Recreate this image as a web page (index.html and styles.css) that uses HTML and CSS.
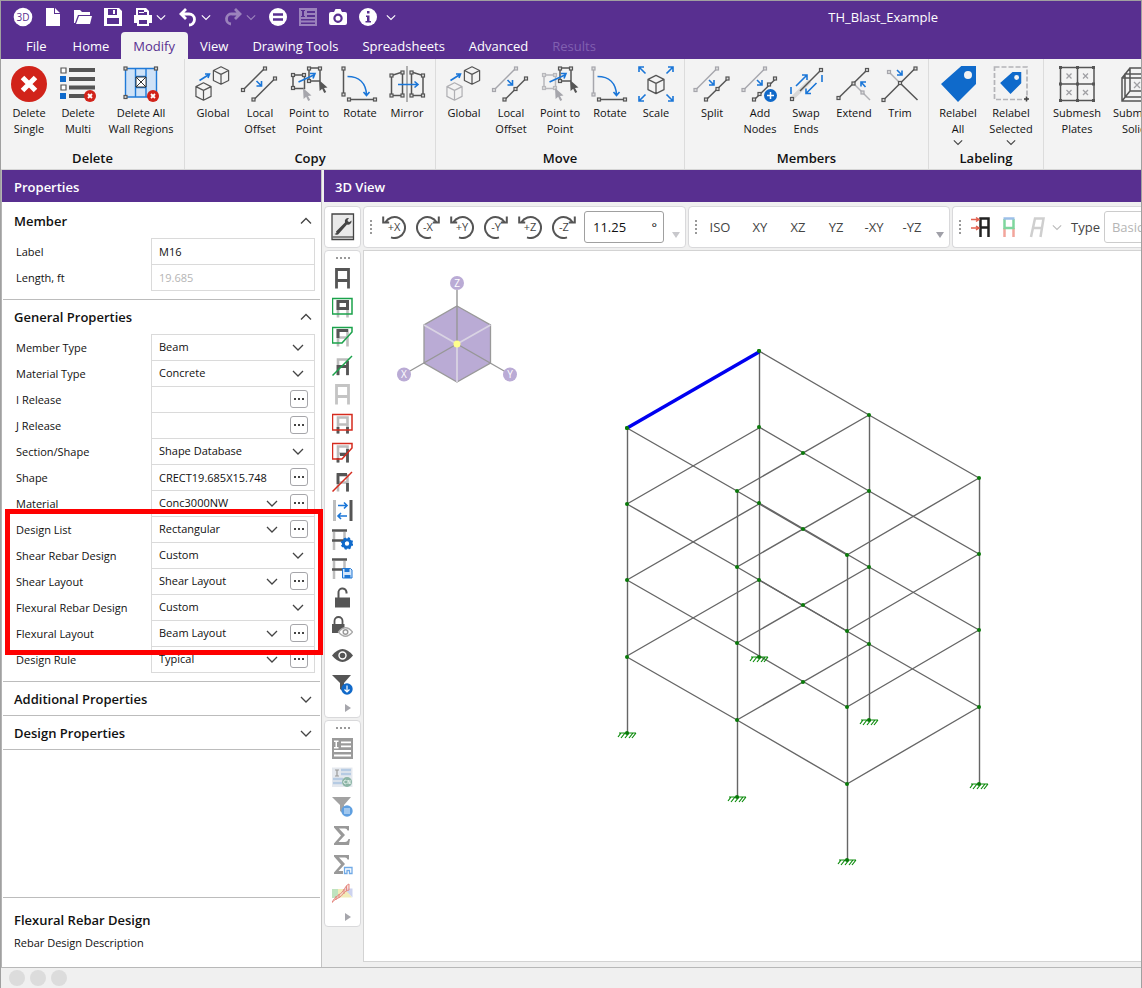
FILE: index.html
```html
<!DOCTYPE html>
<html lang="en">
<head>
<meta charset="utf-8">
<title>TH_Blast_Example</title>
<link rel="stylesheet" href="styles.css">
</head>
<body>
<svg class="sprite" aria-hidden="true">
  <symbol id="chev" viewBox="0 0 12 12"><path d="M1 4l5 5 5-5" fill="none" stroke="currentColor" stroke-width="1.3"/></symbol>
  <symbol id="chev-up" viewBox="0 0 12 12"><path d="M1 8.500l5-5 5 5" fill="none" stroke="currentColor" stroke-width="1.300"/></symbol>
  <symbol id="dots" viewBox="0 0 12 4"><path d="M1 1h2v2h-2zM5 1h2v2h-2zM9 1h2v2h-2z" fill="#444"/></symbol>
  <symbol id="cube" viewBox="0 0 18 20" overflow="visible"><path d="M9 .8l8 4v10.400l-8 4-8-4V4.800zM1 4.800l8 4 8-4M9 8.800v10.400" fill="none" stroke="currentColor" stroke-width="1.300" stroke-linejoin="round"/></symbol>
  <symbol id="nd" viewBox="0 0 4 4" overflow="visible"><rect x=".5" y=".5" width="3" height="3" fill="#ddd" stroke="currentColor" stroke-width="1.200"/></symbol>
  <symbol id="cursor" viewBox="0 0 9 13"><path d="M0 0l8.500 7.500-3.500.4 2.200 4-2 1-2-4.200L.6 11z" fill="currentColor"/></symbol>
  <symbol id="badx" viewBox="0 0 12 12"><circle cx="6" cy="6" r="6" fill="#d1231a"/><path d="M4 4l4 4M8 4l-4 4" stroke="#fff" stroke-width="1.800"/></symbol>
  <symbol id="tag" viewBox="0 0 36 36"><path fill-rule="evenodd" d="M36 0H21.300L1 18l17 18 18-18zM28 5a4 4 0 1 1 0 8 4 4 0 0 1 0-8z" fill="#0f6acb"/></symbol>
  <symbol id="ccw" viewBox="0 0 24 24"><path d="M3.400 7.300A10.500 10.500 0 1 1 9 22.400M1.200 1.500v6h6" fill="none" stroke="#555" stroke-width="2"/></symbol>
  <symbol id="cw" viewBox="0 0 24 24"><path d="M20.600 7.300A10.500 10.500 0 1 0 15 22.400M22.800 1.500v6h-6" fill="none" stroke="#555" stroke-width="2"/></symbol>
  <symbol id="frame" viewBox="0 0 21 21"><path d="M4.500 20.500v-19h12v19M4.500 12.500h12" fill="none" stroke="currentColor" stroke-width="2.800"/></symbol>
  <symbol id="frame-s" viewBox="0 0 21 21"><path d="M6 20.500v-16h9.500v16M6 11.500h9.500" fill="none" stroke="#bdbdbd" stroke-width="2.600"/></symbol>
  <symbol id="shelf" viewBox="0 0 21 21"><path d="M2 3v18M12.500 3v9" stroke="#bdbdbd" stroke-width="2.500"/><path d="M0 1.500h15M0 11.500h14" stroke="#555" stroke-width="2.600"/></symbol>
  <symbol id="sigma" viewBox="0 0 21 21"><path d="M2 1h15v4.500h-1.500Q15 3.500 13 3.500H7l6 6.500-6.500 7H13q2.500 0 3.500-3H18L17 20H2v-1.500l7-8-7-8z" fill="#999"/></symbol>
  <symbol id="next" viewBox="0 0 8 10"><path d="M1 1l6 4-6 4z" fill="#a6a6ac"/></symbol>
  <symbol id="down" viewBox="0 0 8 6"><path d="M0 0h8L4 6z" fill="currentColor"/></symbol>
</svg>

<div class="window">
  <header class="titlebar">
    <div class="quick">
      <button class="q" aria-label="3D"><svg viewBox="0 0 20 20"><circle cx="10" cy="10" r="9.300" fill="#fff"/><text x="10" y="14" text-anchor="middle" class="t3d">3D</text></svg></button>
      <button class="q" aria-label="New"><svg viewBox="0 0 20 20"><path d="M3 1h8v6h6v12H3zM12 1l5 5h-5z" fill="#fff"/></svg></button>
      <button class="q" aria-label="Open"><svg viewBox="0 0 20 20"><path d="M1 3h6l2 2h8v3H5L2 16H1zM6 9h13l-2 8H3z" fill="#fff"/></svg></button>
      <button class="q" aria-label="Save"><svg viewBox="0 0 20 20"><path fill-rule="evenodd" d="M1 1h15l3 3v15H1zM5 2v6h9V2zM10 3h2v4h-2zM4 11v6h12v-6z" fill="#fff"/></svg></button>
      <button class="q split" aria-label="Print"><svg viewBox="0 0 20 20"><path fill-rule="evenodd" d="M5 1h8l3 3v4h3v8h-3v3H4v-3H1V8h2V1zM5 3v5h9V5h-3V3zM6 13v4h8v-4zM6 5h5v1H6z" fill="#fff"/></svg><svg class="c"><use href="#chev"/></svg></button>
      <button class="q split" aria-label="Undo"><svg viewBox="0 0 20 20"><path d="M8 2L3 7l5 5M3 7h8a5 5 0 0 1 0 11" fill="none" stroke="#fff" stroke-width="2.800"/></svg><svg class="c"><use href="#chev"/></svg></button>
      <button class="q split dim" aria-label="Redo"><svg viewBox="0 0 20 20"><path d="M12 2l5 5-5 5M17 7H9a5 5 0 0 0-1 10" fill="none" stroke="#fff" stroke-width="2.800"/></svg><svg class="c"><use href="#chev"/></svg></button>
      <button class="q" aria-label="Solve"><svg viewBox="0 0 20 20"><circle cx="10" cy="10" r="9" fill="#fff"/><path d="M5 7.500h10M5 12.500h10" stroke="#582f90" stroke-width="2.500"/></svg></button>
      <button class="q dim" aria-label="Results list"><svg viewBox="0 0 20 20"><path fill-rule="evenodd" d="M1 1h18v18H1zM3 3v1h1v5H3v1h4V9H6V4h1V3zM9 4v2h8V4zM9 8v2h8V8zM3 12v1.500h14V12zM3 15.500V17h14v-1.500z" fill="#fff"/></svg></button>
      <button class="q" aria-label="Snapshot"><svg viewBox="0 0 20 20"><path fill-rule="evenodd" d="M3 5h3l1.500-3h5L14 5h3q2 0 2 2v9q0 2-2 2H3q-2 0-2-2V7q0-2 2-2zM10 6.500a4.700 4.700 0 1 0 0 9.400 4.700 4.700 0 0 0 0-9.400zM10 8.700a2.500 2.500 0 1 1 0 5 2.500 2.500 0 0 1 0-5z" fill="#fff"/></svg></button>
      <button class="q" aria-label="Info"><svg viewBox="0 0 20 20"><circle cx="10" cy="10" r="9" fill="#fff"/><path d="M9 4h2.500v2.500H9zM8 8.500h3.500V14H13v1.500H7.500V14H9v-4H8z" fill="#582f90"/></svg></button>
      <button class="q slim" aria-label="Customize"><svg class="c"><use href="#chev"/></svg></button>
    </div>
    <h1>TH_Blast_Example</h1>
  </header>
  <nav class="tabs">
    <a href="#file">File</a><a href="#home">Home</a><a href="#modify" class="on">Modify</a><a href="#view">View</a><a href="#draw">Drawing Tools</a><a href="#sheets">Spreadsheets</a><a href="#adv">Advanced</a><a href="#results" class="dim">Results</a>
  </nav>

  <div class="ribbon">
    <section class="group g-delete">
      <div class="tools">
        <button><svg viewBox="0 0 36 36"><circle cx="18" cy="18" r="18" fill="#d1231a"/><path d="M11.500 11.500l13 13M24.500 11.500l-13 13" stroke="#fff" stroke-width="5"/></svg>Delete<br>Single</button>
        <button><svg viewBox="0 0 36 36"><path d="M1 2h5v5H1zM1 19h5v5H1z" fill="#fff" stroke="#555" stroke-width="1.200"/><path d="M0 10h6v6H0zM0 27h6v6H0z" fill="#0f6acb"/><path d="M9 4h26M9 13h26M9 21.500h26M9 30h16" stroke="#555" stroke-width="4"/><use href="#badx" x="24" y="24" width="12" height="12"/></svg>Delete<br>Multi</button>
        <button><svg viewBox="0 0 36 36"><path d="M2.500 2.500h31v28.500h-31z" fill="#cfe2f7"/><path d="M2.500 2.500h31M2.500 31h31M2.500 2v29M33.500 2v29M12.500 2v29M23 2v29M12.500 10.500H23M12.500 21.500H23" stroke="#1f7ad8" stroke-width="1.400"/><path d="M13 11h10v10H13zM13 11l10 10M23 11L13 21" fill="#fff" stroke="#333" stroke-width="1"/><g color="#555"><use href="#nd" x="0.500" y="0.500" width="4" height="4"/><use href="#nd" x="31" y="0.500" width="4" height="4"/><use href="#nd" x="0.500" y="29" width="4" height="4"/></g><use href="#badx" x="24" y="24" width="12" height="12"/></svg>Delete All<br>Wall Regions</button>
      </div>
      <h2>Delete</h2>
    </section>
    <section class="group g-copy">
      <div class="tools">
        <button><svg viewBox="0 0 36 36"><g color="#555"><use href="#cube" x="17" y="0" width="18" height="19"/><use href="#cube" x="0" y="16" width="17" height="19"/></g><path d="M4.500 14.500L14 8.500M10 8H14.500L13 12" class="b"/></svg>Global</button>
        <button><svg viewBox="0 0 36 36"><g color="#555"><path d="M1 24L23 2M11.500 34L33 12.500" class="k"/><use href="#nd" x="-1" y="22" width="4" height="4"/><use href="#nd" x="21" y="0.500" width="4" height="4"/><use href="#nd" x="9.500" y="31.500" width="4" height="4"/><use href="#nd" x="31" y="10.500" width="4" height="4"/></g><path d="M14.500 15l5 5M19.500 15v5h-5" class="b"/></svg>Local<br>Offset</button>
        <button><svg viewBox="0 0 36 36"><g color="#555"><path d="M2 9h11.500v13.500H2zM18 2h11v13H18z" class="k"/><use href="#nd" x="0" y="7" width="4" height="4"/><use href="#nd" x="11" y="7" width="4" height="4"/><use href="#nd" x="0" y="20" width="4" height="4"/><use href="#nd" x="16" y="0.500" width="4" height="4"/><use href="#nd" x="27" y="0.500" width="4" height="4"/><use href="#nd" x="16" y="13" width="4" height="4"/><use href="#cursor" x="28" y="14" width="9" height="13"/></g><g color="#a6a6ac"><use href="#cursor" x="12" y="22" width="9" height="13"/></g><path d="M7.500 16L24 8.500M19 7.500h5L22 12.500" class="b"/></svg>Point to<br>Point</button>
        <button><svg viewBox="0 0 36 36"><g color="#555"><path d="M1.500 2v26M7 33.500h26" class="k"/><use href="#nd" x="-.5" y="0.500" width="4" height="4"/><use href="#nd" x="-.5" y="26.500" width="4" height="4"/><use href="#nd" x="5" y="31.500" width="4" height="4"/><use href="#nd" x="31" y="31.500" width="4" height="4"/></g><path d="M5.500 10.500C17 10.500 24 17 24.500 29M21.500 26l3 3.500 3-3.500" class="b"/></svg>Rotate</button>
        <button><svg viewBox="0 0 36 36"><path d="M18 0v36" stroke="#b0b0b0" stroke-width="2"/><g color="#555"><path d="M2.500 9.500l11-3.500v23.500h-11zM22.500 6l11.500 3.500v20H22.500z" class="k"/><use href="#nd" x="0.500" y="7.500" width="4" height="4"/><use href="#nd" x="11.500" y="4.500" width="4" height="4"/><use href="#nd" x="0.500" y="27.500" width="4" height="4"/><use href="#nd" x="11.500" y="27.500" width="4" height="4"/><use href="#nd" x="20.500" y="4.500" width="4" height="4"/><use href="#nd" x="32" y="7.500" width="4" height="4"/><use href="#nd" x="20.500" y="27.500" width="4" height="4"/><use href="#nd" x="32" y="27.500" width="4" height="4"/></g><path d="M9 18.500h20M25.500 15.500l3.500 3-3.500 3" class="b"/></svg>Mirror</button>
      </div>
      <h2>Copy</h2>
    </section>
    <section class="group g-move">
      <div class="tools">
        <button><svg viewBox="0 0 36 36"><g color="#555"><use href="#cube" x="17" y="0" width="18" height="19"/></g><g color="#b0b0b4"><use href="#cube" x="0" y="16" width="17" height="19"/></g><path d="M4.500 14.500L14 8.500M10 8H14.500L13 12" class="b"/></svg>Global</button>
        <button><svg viewBox="0 0 36 36"><g color="#a6a6ac"><path d="M1 24L23 2" class="k"/><use href="#nd" x="-1" y="22" width="4" height="4"/><use href="#nd" x="21" y="0.500" width="4" height="4"/></g><g color="#555"><path d="M11.500 34L33 12.500" class="k"/><use href="#nd" x="9.500" y="31.500" width="4" height="4"/><use href="#nd" x="20.500" y="21" width="4" height="4"/><use href="#nd" x="31" y="10.500" width="4" height="4"/></g><path d="M14.500 14l5 5M19.500 14v5h-5" class="b"/></svg>Local<br>Offset</button>
        <button><svg viewBox="0 0 36 36"><g color="#b8b8bc"><path d="M2 9h11.500v13.500H2z" class="k"/><use href="#nd" x="0" y="7" width="4" height="4"/><use href="#nd" x="11" y="7" width="4" height="4"/><use href="#nd" x="0" y="20" width="4" height="4"/><use href="#nd" x="11" y="20" width="4" height="4"/></g><g color="#555"><path d="M18 2h11v13H18z" class="k"/><use href="#nd" x="16" y="0.500" width="4" height="4"/><use href="#nd" x="27" y="0.500" width="4" height="4"/><use href="#nd" x="16" y="13" width="4" height="4"/><use href="#cursor" x="28" y="14" width="9" height="13"/></g><g color="#a6a6ac"><use href="#cursor" x="13" y="22" width="9" height="13"/></g><path d="M7.500 16L24 8.500M19 7.500h5L22 12.500" class="b"/></svg>Point to<br>Point</button>
        <button><svg viewBox="0 0 36 36"><g color="#a6a6ac"><path d="M1.500 2v26" class="k"/><use href="#nd" x="-.5" y="0.500" width="4" height="4"/><use href="#nd" x="-.5" y="26.500" width="4" height="4"/></g><g color="#555"><path d="M7 33.500h26" class="k"/><use href="#nd" x="5" y="31.500" width="4" height="4"/><use href="#nd" x="31" y="31.500" width="4" height="4"/></g><path d="M5.500 10.500C17 10.500 24 17 24.500 29M21.500 26l3 3.500 3-3.500" class="b"/></svg>Rotate</button>
        <button><svg viewBox="0 0 36 36"><g color="#555"><use href="#cube" x="9" y="8" width="18" height="21"/></g><path d="M7.500 7.500L1 1M1 6V1h5M28.500 7.500L35 1M30 1h5v5M7.500 28.500L1 35M1 30v5h5M28.500 28.500L35 35M30 35h5v-5" class="b"/></svg>Scale</button>
      </div>
      <h2>Move</h2>
    </section>
    <section class="group g-members">
      <div class="tools">
        <button><svg viewBox="0 0 36 36"><g color="#a6a6ac"><path d="M1.500 24L23.500 2" class="k"/><use href="#nd" x="-.5" y="22" width="4" height="4"/><use href="#nd" x="21" y="0.500" width="4" height="4"/></g><g color="#555"><path d="M12 34L34 12.500" class="k"/><use href="#nd" x="10" y="31.500" width="4" height="4"/><use href="#nd" x="21.500" y="21" width="4" height="4"/><use href="#nd" x="31.500" y="10.500" width="4" height="4"/></g><path d="M15 14l5 5M20 14v5h-5" class="b"/></svg>Split</button>
        <button><svg viewBox="0 0 36 36"><g color="#a6a6ac"><path d="M1.500 24L23.500 2" class="k"/><use href="#nd" x="-.5" y="22" width="4" height="4"/><use href="#nd" x="21" y="0.500" width="4" height="4"/></g><g color="#555"><path d="M12 34L34 12.500" class="k"/><use href="#nd" x="10" y="31.500" width="4" height="4"/><use href="#nd" x="15.500" y="26" width="4" height="4"/><use href="#nd" x="25" y="16.500" width="4" height="4"/><use href="#nd" x="31" y="10.500" width="4" height="4"/></g><path d="M15 14l5 5M20 14v5h-5" class="b"/><circle cx="28.500" cy="29.500" r="6.500" fill="#1069c9"/><path d="M28.500 26v7M25 29.500h7" stroke="#fff" stroke-width="1.500"/></svg>Add<br>Nodes</button>
        <button><svg viewBox="0 0 36 36"><path d="M4 32.500L22 15" stroke="#d8d8d8" stroke-width="4"/><g color="#555"><path d="M12 25L33 4" class="k"/><use href="#nd" x="2" y="31" width="4" height="4"/><use href="#nd" x="31" y="2" width="4" height="4"/></g><path d="M3 28v-7M8 20L18.500 9.500M14 9h5v5M34 9v7M28.500 17L18 27.500M18 22.500v5h5" class="b"/></svg>Swap<br>Ends</button>
        <button><svg viewBox="0 0 36 36"><path d="M17.500 17.500L34 34" stroke="#b0b0b4" stroke-width="1.400"/><g color="#a6a6ac"><use href="#nd" x="24.500" y="24.500" width="4" height="4"/></g><g color="#555"><path d="M2.500 32L31 4" class="k"/><use href="#nd" x="0.500" y="30" width="4" height="4"/><use href="#nd" x="15.500" y="15.500" width="4" height="4"/><use href="#nd" x="29" y="2" width="4" height="4"/></g><path d="M29.500 21L25 16M25 20.500V16h5" class="b"/></svg>Extend</button>
        <button><svg viewBox="0 0 36 36"><path d="M7 6l11 11" stroke="#b0b0b4" stroke-width="1.400"/><g color="#a6a6ac"><use href="#nd" x="5" y="4" width="4" height="4"/></g><g color="#555"><path d="M1.500 34l32-32M18 17l17.500 17" class="k"/><use href="#nd" x="-.5" y="32" width="4" height="4"/><use href="#nd" x="16" y="15" width="4" height="4"/><use href="#nd" x="31.500" y="0.500" width="4" height="4"/></g><path d="M15 4l5 5M20 4.500V9h-5" class="b"/></svg>Trim</button>
      </div>
      <h2>Members</h2>
    </section>
    <section class="group g-label">
      <div class="tools">
        <button><svg viewBox="0 0 36 36"><use href="#tag" width="36" height="36"/></svg>Relabel<br>All<svg class="c"><use href="#chev"/></svg></button>
        <button><svg viewBox="0 0 36 36"><path d="M1.500 1h32.500v32.500H1.500z" fill="none" stroke="#b4b4b8" stroke-width="1.700" stroke-dasharray="5 2"/><use href="#tag" x="6.500" y="6" width="22" height="22"/><path d="M33.500 30.500v5M31 33h5" stroke="#444" stroke-width="1.500"/></svg>Relabel<br>Selected<svg class="c"><use href="#chev"/></svg></button>
      </div>
      <h2>Labeling</h2>
    </section>
    <section class="group g-mesh">
      <div class="tools">
        <button><svg viewBox="0 0 36 36"><g color="#555"><path d="M1.500 1.500H35v33H1.500zM18.500 1.500v33M1.500 18H35" class="k"/><path d="M0 0h3v3H0zM17 0h3v3h-3zM33 0h3v3h-3zM0 16.500h3v3H0zM17 16.500h3v3h-3zM33 16.500h3v3h-3zM0 33h3v3H0zM17 33h3v3h-3zM33 33h3v3h-3z" fill="#555"/></g><path d="M7.500 7.500l5 5M12.500 7.500l-5 5M24 7.500l5 5M29 7.500l-5 5M7.500 24l5 5M12.500 24l-5 5M24 24l5 5M29 24l-5 5" stroke="#a0a0a4" stroke-width="1.300"/></svg>Submesh<br>Plates</button>
        <button><svg viewBox="0 0 36 36"><g color="#555"><path d="M3 12h24v23H3zM11 2h24v23H11zM3 12l8-10M27 12l8-10M3 35l8-10M27 35l8-10M6 8h24v23H6z" class="k"/></g><path d="M15 16l6 6M21 16l-6 6" stroke="#a0a0a4" stroke-width="1.300"/></svg>Submesh<br>Solids</button>
      </div>
    </section>
  </div>

  <main class="work">
    <aside class="props">
      <h2 class="bar">Properties</h2>
      <section class="sec">
        <h3>Member<svg class="c"><use href="#chev-up"/></svg></h3>
        <div class="rows">
          <div class="row"><label for="f1">Label</label><div class="field"><input id="f1" value="M16"></div></div>
          <div class="row"><label for="f2">Length, ft</label><div class="field"><input id="f2" value="19.685" disabled></div></div>
        </div>
      </section>
      <section class="sec">
        <h3>General Properties<svg class="c"><use href="#chev-up"/></svg></h3>
        <div class="rows">
          <div class="row"><label for="g1">Member Type</label><div class="field"><div class="pick"><select id="g1"><option>Beam</option></select><svg class="c"><use href="#chev"/></svg></div></div></div>
          <div class="row"><label for="g2">Material Type</label><div class="field"><div class="pick"><select id="g2"><option>Concrete</option></select><svg class="c"><use href="#chev"/></svg></div></div></div>
          <div class="row"><label for="g3">I Release</label><div class="field"><input id="g3"><button class="more" aria-label="Edit I Release"><svg><use href="#dots"/></svg></button></div></div>
          <div class="row"><label for="g4">J Release</label><div class="field"><input id="g4"><button class="more" aria-label="Edit J Release"><svg><use href="#dots"/></svg></button></div></div>
          <div class="row"><label for="g5">Section/Shape</label><div class="field"><div class="pick"><select id="g5"><option>Shape Database</option></select><svg class="c"><use href="#chev"/></svg></div></div></div>
          <div class="row"><label for="g6">Shape</label><div class="field"><input id="g6" value="CRECT19.685X15.748"><button class="more" aria-label="Edit Shape"><svg><use href="#dots"/></svg></button></div></div>
          <div class="row"><label for="g7">Material</label><div class="field"><div class="pick"><select id="g7"><option>Conc3000NW</option></select><svg class="c"><use href="#chev"/></svg></div><button class="more" aria-label="Edit Material"><svg><use href="#dots"/></svg></button></div></div>
          <div class="marked">
            <div class="row"><label for="g8">Design List</label><div class="field"><div class="pick"><select id="g8"><option>Rectangular</option></select><svg class="c"><use href="#chev"/></svg></div><button class="more" aria-label="Edit Design List"><svg><use href="#dots"/></svg></button></div></div>
            <div class="row"><label for="g9">Shear Rebar Design</label><div class="field"><div class="pick"><select id="g9"><option>Custom</option></select><svg class="c"><use href="#chev"/></svg></div></div></div>
            <div class="row"><label for="g10">Shear Layout</label><div class="field"><div class="pick"><select id="g10"><option>Shear Layout</option></select><svg class="c"><use href="#chev"/></svg></div><button class="more" aria-label="Edit Shear Layout"><svg><use href="#dots"/></svg></button></div></div>
            <div class="row"><label for="g11">Flexural Rebar Design</label><div class="field"><div class="pick"><select id="g11"><option>Custom</option></select><svg class="c"><use href="#chev"/></svg></div></div></div>
            <div class="row"><label for="g12">Flexural Layout</label><div class="field"><div class="pick"><select id="g12"><option>Beam Layout</option></select><svg class="c"><use href="#chev"/></svg></div><button class="more" aria-label="Edit Flexural Layout"><svg><use href="#dots"/></svg></button></div></div>
          </div>
          <div class="row"><label for="g13">Design Rule</label><div class="field"><div class="pick"><select id="g13"><option>Typical</option></select><svg class="c"><use href="#chev"/></svg></div><button class="more" aria-label="Edit Design Rule"><svg><use href="#dots"/></svg></button></div></div>
        </div>
      </section>
      <section class="sec shut"><h3>Additional Properties<svg class="c"><use href="#chev"/></svg></h3></section>
      <section class="sec shut"><h3>Design Properties<svg class="c"><use href="#chev"/></svg></h3></section>
      <footer class="hint"><h3>Flexural Rebar Design</h3><p>Rebar Design Description</p></footer>
    </aside>

    <section class="view">
      <h2 class="bar">3D View</h2>
      <div class="top">
        <div class="box wrench"><button aria-label="View settings"><svg viewBox="0 0 24 28"><path d="M1 1h21.500v25.500H1z" fill="#e9e9e9" stroke="#444" stroke-width="1.300"/><path d="M1.500 24h21" stroke="#444" stroke-width="1.200"/><path d="M5 18.500l9-9a3.500 3.500 0 0 1 4-4.500l-1.500 2 .5 1.500 1.500.5 2-1.500a3.500 3.500 0 0 1-4.500 4l-8 9a3 3 0 0 1-4.500.5l2-1z" fill="#444"/></svg></button></div>
        <div class="box">
          <i class="grip"></i>
          <button class="rot"><svg><use href="#ccw"/></svg><span>+X</span></button>
          <button class="rot"><svg><use href="#cw"/></svg><span>-X</span></button>
          <button class="rot"><svg><use href="#ccw"/></svg><span>+Y</span></button>
          <button class="rot"><svg><use href="#cw"/></svg><span>-Y</span></button>
          <button class="rot"><svg><use href="#ccw"/></svg><span>+Z</span></button>
          <button class="rot"><svg><use href="#cw"/></svg><span>-Z</span></button>
          <div class="angle"><input aria-label="Rotation angle" value="11.25"><span>°</span></div>
          <svg class="tri pale"><use href="#down"/></svg>
        </div>
        <div class="box">
          <i class="grip"></i>
          <button class="plane iso">ISO</button><button class="plane">XY</button><button class="plane">XZ</button><button class="plane">YZ</button><button class="plane">-XY</button><button class="plane">-YZ</button>
          <svg class="tri"><use href="#down"/></svg>
        </div>
        <div class="box last">
          <i class="grip"></i>
          <button class="ld" aria-label="Loads"><svg viewBox="0 0 20 22"><path d="M9.500 21V2.500h8V21M9.500 11.500h8" fill="none" stroke="#222" stroke-width="2.500"/><path d="M0 3.500h7M0 12h7M5 1.500l3 2-3 2M5 10l3 2-3 2" fill="none" stroke="#e2604f" stroke-width="1.500"/></svg></button>
          <button class="ld" aria-label="Colors"><svg viewBox="0 0 20 22"><path d="M5.500 12v9M14.500 12v9" stroke="#f2a59b" stroke-width="2.500"/><path d="M5.500 3v9h9V3" fill="none" stroke="#7fd69d" stroke-width="2.500"/><path d="M4.500 2.500h11" stroke="#9cbfe8" stroke-width="2.500"/></svg></button>
          <button class="ld" aria-label="Deflected shape"><svg viewBox="0 0 20 22"><path d="M4 21L8 2.500h8.500L13.500 21M6 12h9" fill="none" stroke="#cfcfcf" stroke-width="2.500"/></svg></button>
          <svg class="c pale"><use href="#chev"/></svg>
          <label for="type">Type</label>
          <select id="type" disabled><option>Basic</option></select>
        </div>
      </div>
      <div class="body">
        <div class="rails">
          <div class="rail">
            <i class="grip h"></i>
            <button aria-label="Select all"><svg color="#555"><use href="#frame"/></svg></button>
            <button aria-label="Box select"><svg viewBox="0 0 21 21"><use href="#frame-s"/><path d="M6 4.500h9.500v7H6z" fill="none" stroke="#555" stroke-width="3"/><path d="M.5 1.500h19.500V17H.5z" class="g"/></svg></button>
            <button aria-label="Polygon select"><svg viewBox="0 0 21 21"><use href="#frame-s"/><path d="M6 12V4.500h10" fill="none" stroke="#555" stroke-width="3"/><path d="M.5 1.500H20V6L10 17H.5z" class="g"/></svg></button>
            <button aria-label="Line select"><svg viewBox="0 0 21 21"><use href="#frame-s"/><path d="M6 20v-8.500h9.500V20M15.500 11V6" fill="none" stroke="#555" stroke-width="2.800"/><path d="M.5 20.500L20 1" class="g"/></svg></button>
            <button aria-label="Unselect all"><svg color="#c4c4c4"><use href="#frame"/></svg></button>
            <button aria-label="Box unselect"><svg viewBox="0 0 21 21"><use href="#frame-s"/><path d="M6 14v6.500M15.500 14v6.500" stroke="#555" stroke-width="2.800"/><path d="M.5 1.500h19.500V17H.5z" class="r"/></svg></button>
            <button aria-label="Polygon unselect"><svg viewBox="0 0 21 21"><use href="#frame-s"/><path d="M6 16v4.500M8 12.500h7.500M15.500 7v13.500" stroke="#555" stroke-width="2.800"/><path d="M.5 1.500H20V6L10 17H.5z" class="r"/></svg></button>
            <button aria-label="Line unselect"><svg viewBox="0 0 21 21"><use href="#frame-s"/><path d="M6 13V3.500h9M15.500 12v8.500" fill="none" stroke="#555" stroke-width="2.800"/><path d="M.5 20.500L20 1" class="r"/></svg></button>
            <button aria-label="Invert selection"><svg viewBox="0 0 21 21"><path d="M2.500 0v21" stroke="#bdbdbd" stroke-width="3"/><path d="M19 0v21" stroke="#555" stroke-width="3"/><path d="M6 5.500h9M12 2.500l3 3-3 3M15 16H6M9 13l-3 3 3 3" class="b"/></svg></button>
            <button aria-label="Selection settings"><svg viewBox="0 0 21 21"><use href="#shelf"/><circle cx="15" cy="14.500" r="3.700" fill="none" stroke="#0f6acb" stroke-width="3"/><circle cx="15" cy="14.500" r="5.300" fill="none" stroke="#0f6acb" stroke-width="1.800" stroke-dasharray="2.200 2"/></svg></button>
            <button aria-label="Save selection"><svg viewBox="0 0 21 21"><use href="#shelf"/><path d="M10.500 10.500h8l1.500 1.500v8h-9.500z" fill="#d4e6fa" stroke="#1f77d4"/><path d="M12.500 11h5v3h-5zM12.500 17h6v3h-6z" fill="#1f77d4"/></svg></button>
            <button aria-label="Unlock"><svg viewBox="0 0 21 21"><path d="M3 10.500h15v10H3z" fill="#555"/><path d="M6.500 11V6a4 4 0 0 1 8-1v1.500" fill="none" stroke="#555" stroke-width="2"/></svg></button>
            <button aria-label="Lock and hide"><svg viewBox="0 0 21 21"><path d="M0 8h12.500v9H0z" fill="#555"/><path d="M2.500 9V5a4 4 0 0 1 8 0v4" fill="none" stroke="#555" stroke-width="1.800"/><path d="M6.500 16q7-8.500 14 0-7 8.500-14 0z" fill="#fff" stroke="#aaa" stroke-width="1.300"/><circle cx="13.500" cy="16" r="2.300" fill="none" stroke="#999" stroke-width="1.500"/></svg></button>
            <button aria-label="Show"><svg viewBox="0 0 21 21"><path d="M0 10.500q10.500-13 21 0-10.500 13-21 0z" fill="#555"/><circle cx="10.500" cy="10.500" r="3.500" fill="none" stroke="#fff" stroke-width="1.400"/></svg></button>
            <button aria-label="Filter"><svg viewBox="0 0 21 21"><path d="M0 1h19l-7 8v9l-4-3V9z" fill="#555"/><circle cx="15" cy="15" r="5.700" fill="#1069c9"/><path d="M15 11.500v6.500M12.500 15.500l2.500 2.500 2.500-2.500" fill="none" stroke="#fff" stroke-width="1.200"/></svg></button>
            <svg class="nx"><use href="#next"/></svg>
          </div>
          <div class="rail">
            <i class="grip h"></i>
            <button aria-label="Summary"><svg viewBox="0 0 21 21"><path fill-rule="evenodd" d="M0 0h21v21H0zM2 2.500V4h1.500v5H2v1.500h4.500V9H5V4h1.500V2.500zM9 3.500v1.700h10V3.500zM9 7.500v1.700h10V7.500zM2 12v2h17v-2zM2 16.500v2h17v-2z" fill="#9a9a9a"/></svg></button>
            <button aria-label="Code check"><svg viewBox="0 0 21 21"><path d="M0 .5h20.500v19.500H0z" fill="#e4e8ee"/><path d="M9 3h10M9 7h10M1 12h10M1 16h9" stroke="#b6cbe3" stroke-width="2.500"/><path d="M3 3h4M5 3v6M3 9h4" stroke="#999" stroke-width="1.200"/><circle cx="15" cy="15" r="5" fill="#8cb5a6"/><path d="M14.500 13.500a1.800 1.800 0 1 0 0 3M16 17v-4l2 4v-4" fill="none" stroke="#e8f3ee"/></svg></button>
            <button aria-label="Filter results"><svg viewBox="0 0 21 21"><path d="M0 1h19l-7 8v9l-4-3V9z" fill="#a2a2a2"/><circle cx="15" cy="15" r="5.700" fill="#5f9fe0"/><path d="M12 13h6M12 15h6M12 17h6" stroke="#e4effb"/></svg></button>
            <button aria-label="Sum"><svg><use href="#sigma"/></svg></button>
            <button aria-label="Sum by level"><svg viewBox="0 0 21 21"><use href="#sigma"/><path d="M11 12h10v9H11z" fill="#fff"/><path d="M12.500 19.500v-6H20v6h-2.500v-3H15v3z" fill="#fff" stroke="#71aae6" stroke-width="1.300"/></svg></button>
            <button aria-label="Diagrams"><svg viewBox="0 0 21 21"><path d="M0 6h8v9H0z" fill="#bfe3bf"/><path d="M6 6h8l6 8.500H6z" fill="#f2ecb9"/><path d="M12 5.500h8.500v9z" fill="#cdd3ef"/><path d="M0 19.500C3 13 8 12 11 8s3-6 6-7v6c-5 1-6 5-9 7s-5 2-8 5.500zM4 13v4M7 11v4M12 6v5M14.500 3v5" fill="#f4c9c5" fill-opacity=".6" stroke="#e58880"/></svg></button>
            <svg class="nx"><use href="#next"/></svg>
          </div>
        </div>
        <div class="canvas">
          <svg role="img" aria-label="Frame model">
            <defs>
              <g id="floor"><path d="M627 428L737 491 847 555M759 351L869 415 979 478M737 491L869 415M847 555L979 478"/></g>
              <g id="joints"><circle cx="627" cy="428" r="2"/><circle cx="759" cy="351" r="2"/><circle cx="737" cy="491" r="2"/><circle cx="869" cy="415" r="2"/><circle cx="847" cy="555" r="2"/><circle cx="979" cy="478" r="2"/><circle cx="803" cy="453" r="2"/></g>
              <g id="fix"><path d="M-8 0H9M-6 5l4-5M-2 5l4-5M2 5l4-5M5 5l4-5M-9 4l3-4" fill="none" stroke="#0a8a0a" stroke-width="1.200"/><circle r="2"/></g>
            </defs>
            <g transform="translate(-364 -251)">
              <g fill="none" stroke="#666" stroke-width="1.400">
                <use href="#floor"/><use href="#floor" y="76"/><use href="#floor" y="152"/><use href="#floor" y="229"/>
                <path d="M627 504L759 428M627 580L759 504M627 656L759 580"/>
                <path d="M627.500 428v305M759.500 351v305M737.500 491v305M869.500 415v305M847.500 555v305M979.500 478v305"/>
              </g>
              <g fill="#0a7a0a">
                <use href="#joints"/><use href="#joints" y="76"/><use href="#joints" y="152"/><use href="#joints" y="229"/>
                <use href="#fix" x="627" y="733"/><use href="#fix" x="759" y="657"/><use href="#fix" x="737" y="797"/><use href="#fix" x="869" y="720"/><use href="#fix" x="847" y="860"/><use href="#fix" x="979" y="784"/>
              </g>
              <path d="M628 427.500L759 352" stroke="#0000f0" stroke-width="3.500"/>
              <g fill="#0a7a0a"><circle cx="627" cy="428" r="2"/><circle cx="759" cy="351" r="2"/></g>
              <path d="M457 306l33.500 19v38L457 382l-33-19v-38z" fill="#baabd5" stroke="#999" stroke-width="1.300"/>
              <path d="M424 325l33 19 33.500-19M457 344v38" fill="none" stroke="#d9d3e3" stroke-width="1.800"/>
              <path d="M457 290v54M409 371.500l48-27.500 48 27.500" fill="none" stroke="#979797" stroke-width="1.400"/>
              <circle cx="457" cy="344" r="3.500" fill="#ffff8c"/>
              <g fill="#baabd5"><circle cx="457" cy="283" r="7"/><circle cx="404" cy="374.500" r="7"/><circle cx="510" cy="374.500" r="7"/></g>
              <g class="axis"><text x="457" y="287">Z</text><text x="404" y="378">X</text><text x="510" y="378">Y</text></g>
            </g>
          </svg>
        </div>
      </div>
    </section>
  </main>
  <footer class="status"><i></i><i></i><i></i></footer>
</div>
</body>
</html>
```
FILE: styles.css
```css
* { box-sizing: border-box; }
body { margin: 0; font: 11px/16px "Open Sans", "Noto Sans", sans-serif; color: #111; }
h1, h2, h3, p { margin: 0; }
button, input, select { font: inherit; color: inherit; margin: 0; padding: 0; border: 0; background: none; border-radius: 0; }
svg { display: block; }
.sprite { position: absolute; width: 0; height: 0; }
.c { width: 12px; height: 12px; flex: none; color: #444; }
.b { fill: none; stroke: #1a76d8; stroke-width: 1.6; }
.k { fill: none; stroke: currentColor; stroke-width: 1.5; }
.g { fill: none; stroke: #1ba24b; stroke-width: 1.5; }
.r { fill: none; stroke: #d52b1e; stroke-width: 1.5; }

.window { display: flex; flex-direction: column; min-height: 100vh; border: 1px solid #a0a0a0; border-bottom: 0; background: #f0f0f0; overflow: hidden; }

.titlebar { display: flex; align-items: center; height: 31px; padding-left: 7px; background: #582f90; color: #fff; }
.titlebar h1 { margin-left: auto; padding-right: 203px; font-size: 13px; font-weight: 400; }
.quick { display: flex; }
.q { display: flex; align-items: center; justify-content: center; width: 30px; height: 31px; }
.q svg { width: 20px; height: 20px; }
.q .c { width: 10px; height: 10px; color: #fff; }
.q.split { width: 45px; gap: 3px; padding-right: 2px; }
.q.slim { width: 16px; }
.q.dim { opacity: 0.4; }
.t3d { font-size: 10px; fill: #582f90; }

.tabs { display: flex; height: 27px; padding-left: 13px; background: #582f90; color: #fff; font-size: 13px; line-height: 28px; }
.tabs a { padding: 0 12px; color: inherit; text-decoration: none; }
.tabs a:first-child { margin-right: 2px; }
.tabs .on { padding-right: 13px; background: #f3f3f3; color: #582f90; border-radius: 4px 4px 0 0; }
.tabs .dim { color: #8160b0; }

.ribbon { display: flex; height: 111px; background: #f3f3f3; border-bottom: 1px solid #d5d5d5; overflow: hidden; }
.group { display: flex; flex-direction: column; flex: none; padding-top: 7px; border-right: 1px solid #dcdcdc; }
.group h2 { font-size: 13px; font-weight: 600; line-height: 18px; text-align: center; }
.tools { display: grid; height: 83px; }
.tools button { display: block; text-align: center; align-self: start; white-space: nowrap; }
.tools svg { width: 36px; height: 36px; margin: 0 auto 3px; overflow: visible; }
.tools .c { width: 10px; height: 10px; margin: 0 auto; }
.g-delete .tools { grid-template-columns: 48px 50px 76px; padding: 0 5px 0 4px; }
.g-copy .tools { grid-template-columns: 48px 46px 52px 50px 44px; padding: 0 6px 0 4px; }
.g-move .tools { grid-template-columns: 48px 46px 52px 48px 44px; padding: 0 6px 0 4px; }
.g-members .tools { grid-template-columns: 48px 48px 44px 52px 40px; padding: 0 8px 0 3px; }
.g-label .tools { grid-template-columns: 52px 54px; padding: 0 5px 0 3px; }
.g-mesh .tools { grid-template-columns: 58px 62px; padding: 0 4px; }

.work { display: flex; flex: 1; gap: 2px; }
.bar { height: 32px; padding-left: 11px; background: #582f90; color: #fff; font-size: 13px; font-weight: 600; line-height: 34px; }

.props { display: flex; flex-direction: column; flex: none; width: 321px; background: #fff; border-left: 1px solid #b4b4b4; border-right: 1px solid #c4c4c4; }
.props .bar { margin-bottom: 2px; padding-left: 12px; }
.sec { margin: 0 1px; padding-bottom: 8px; border-bottom: 1px solid #bcbcbc; }
.sec h3 { display: flex; align-items: center; justify-content: space-between; height: 34px; padding: 0 8px 0 11px; font-size: 13px; font-weight: 600; }
.sec.shut { padding: 0; }
.sec.shut h3 { height: 33px; }
.rows { padding: 0 5px 1px 13px; }
.row { display: flex; align-items: center; justify-content: space-between; height: 26px; }
.row label { padding-top: 2px; }
.field { display: flex; align-items: center; width: 164px; height: 27px; align-self: flex-start; padding: 0 6px 1px 7px; border: 1px solid #dadada; }
.field input { flex: 1; min-width: 0; width: 0; height: 20px; }
.field input:disabled { color: #b5b5b5; }
.pick { display: grid; flex: 1; align-items: center; padding-right: 4px; }
.pick select { grid-area: 1 / 1; appearance: none; height: 20px; }
.pick .c { grid-area: 1 / 1; justify-self: end; pointer-events: none; }
.more { display: grid; place-items: center; flex: none; width: 18px; height: 18px; margin-left: 8px; border: 1px solid #a6a6aa; border-radius: 3px; background: #fff; }
.more svg { width: 12px; height: 4px; }
.marked { position: relative; }
.marked::after { content: ""; position: absolute; inset: -7px -8px -9px -11px; border: 5px solid #fe0000; pointer-events: none; z-index: 2; }
.hint { height: 70px; margin: auto 1px 0; padding: 14px 11px 0; border-top: 1px solid #bcbcbc; }
.hint h3 { margin-bottom: 7px; font-size: 13px; font-weight: 600; }

.view { display: flex; flex-direction: column; flex: 1; min-width: 0; }
.top { display: flex; gap: 2px; padding: 4px 0 2px; }
.box { display: flex; align-items: center; flex: none; height: 42px; padding-left: 6px; background: #fff; border: 1px solid #d9d9db; border-radius: 4px; }
.box.wrench { width: 37px; padding: 0; justify-content: center; }
.wrench svg { width: 24px; height: 28px; }
.box.last { flex: 1; min-width: 0; border-right: 0; border-radius: 4px 0 0 4px; overflow: hidden; }
.grip { flex: none; width: 2px; height: 14px; background: repeating-linear-gradient(#999 0 2px, transparent 2px 4px); }
.grip.h { display: block; width: 14px; height: 2px; margin: 6px auto 5px; background: repeating-linear-gradient(90deg, #999 0 2px, transparent 2px 4px); }
.rot { display: grid; place-items: center; width: 34px; height: 34px; color: #444; font-size: 11px; line-height: 24px; }
.rot:first-of-type { margin-left: 5px; }
.rot svg, .rot span { grid-area: 1 / 1; }
.rot svg { width: 24px; height: 24px; }
.angle { display: flex; align-items: center; width: 80px; height: 32px; margin-left: 3px; padding: 0 6px 0 8px; border: 1px solid #a0a0a0; border-radius: 3px; font-size: 13px; }
.angle input { flex: 1; width: 0; min-width: 0; }
.tri { width: 8px; height: 6px; margin: 16px 5px 0 5px; color: #a0a0a8; }
.tri.pale { margin-left: 8px; color: #c8c8cc; }
.plane { width: 38px; height: 34px; color: #444; font-size: 13px; }
.plane.iso { width: 42px; margin-left: 2px; }
.ld { width: 28px; height: 34px; padding: 0 4px; }
.ld:first-of-type { margin-left: 6px; }
.ld svg { width: 20px; height: 22px; }
.last .c { width: 10px; height: 10px; margin-left: 1px; color: #bbb; }
.last label { margin: 0 4px 0 9px; color: #444; font-size: 13px; }
.last select { flex: none; width: 90px; height: 32px; padding-left: 7px; appearance: none; border: 1px solid #ccc; border-radius: 3px; color: #b5b5b5; font-size: 13px; opacity: 1; }

.body { display: flex; flex: 1; gap: 2px; }
.rails { display: flex; flex-direction: column; gap: 2px; width: 37px; }
.rail { background: #fff; border: 1px solid #d9d9db; border-radius: 4px; }
.rail button { display: grid; place-items: center; width: 35px; height: 29px; }
.rail button svg { width: 21px; height: 21px; }
.nx { width: 8px; height: 10px; margin: 4px 8px 4px auto; }
.canvas { flex: 1; min-width: 0; margin-bottom: 5px; background: #fff; border: 1px solid #d3d3d3; border-right: 0; }
.canvas svg { width: 100%; height: 100%; }
.axis { fill: #fff; font-size: 10px; text-anchor: middle; }

.status { display: flex; align-items: center; gap: 5px; height: 21px; padding-left: 8px; border-top: 1px solid #b8b8b8; background: #f0f0f0; }
.status i { width: 16px; height: 16px; border-radius: 50%; background: #dcdcdc; }
```
